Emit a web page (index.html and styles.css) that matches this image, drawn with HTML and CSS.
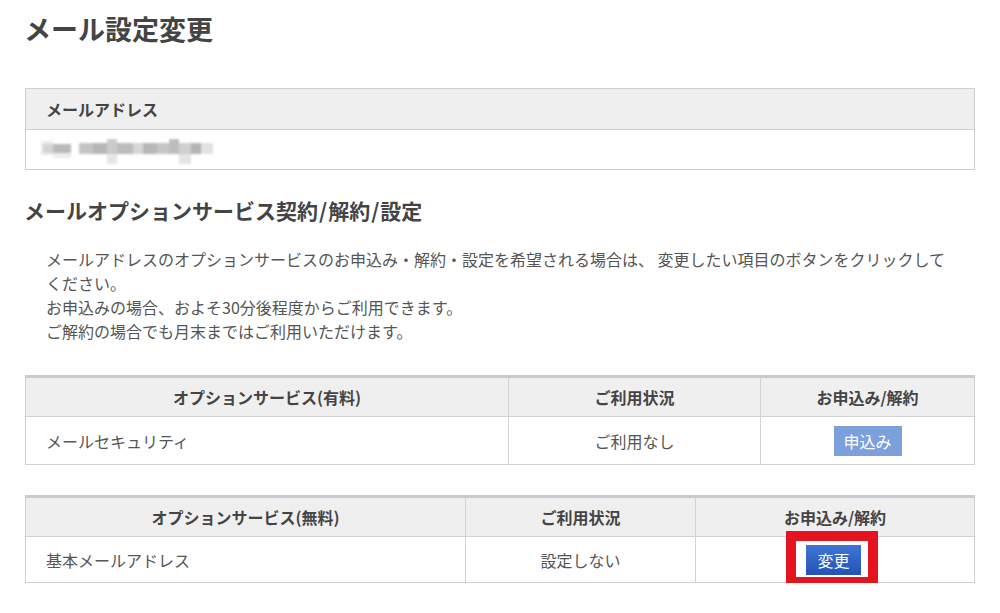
FILE: index.html
```html
<!DOCTYPE html>
<html lang="ja">
<head>
<meta charset="utf-8">
<title>メール設定変更</title>
<link rel="stylesheet" href="styles.css">
</head>
<body>
<div class="page">
  <h1 class="title">メール設定変更</h1>

  <table class="addr">
    <tr><th>メールアドレス</th></tr>
    <tr><td>
      <svg class="blur" width="180" height="30" viewBox="0 0 180 30">
        <rect x="0" y="6" width="12" height="14" fill="#ececec"/>
        <rect x="2" y="9" width="10" height="9" fill="#d4d4d4"/>
        <rect x="12" y="9" width="18" height="9" fill="#b9b9b9"/>
        <rect x="12" y="18" width="18" height="5" fill="#ededed"/>
        <rect x="38" y="8" width="14" height="11" fill="#c4c4c4"/>
        <rect x="52" y="8" width="14" height="11" fill="#b6b6b6"/>
        <rect x="66" y="4" width="10" height="15" fill="#cacaca"/>
        <rect x="66" y="19" width="10" height="10" fill="#e6e6e6"/>
        <rect x="76" y="8" width="16" height="11" fill="#bcbcbc"/>
        <rect x="92" y="8" width="10" height="11" fill="#d6d6d6"/>
        <rect x="102" y="8" width="14" height="11" fill="#b8b8b8"/>
        <rect x="116" y="8" width="12" height="11" fill="#c6c6c6"/>
        <rect x="128" y="4" width="10" height="15" fill="#bdbdbd"/>
        <rect x="138" y="8" width="12" height="11" fill="#cfcfcf"/>
        <rect x="138" y="19" width="12" height="10" fill="#e4e4e4"/>
        <rect x="150" y="8" width="10" height="11" fill="#b4b4b4"/>
        <rect x="160" y="8" width="12" height="11" fill="#e2e2e2"/>
      </svg>
    </td></tr>
  </table>

  <h2 class="section">メールオプションサービス契約<span class="sl">/</span>解約<span class="sl">/</span>設定</h2>

  <p class="note">メールアドレスのオプションサービスのお申込み・解約・設定を希望される場合は、 変更したい項目のボタンをクリックしてください。<br>お申込みの場合、およそ30分後程度からご利用できます。<br>ご解約の場合でも月末まではご利用いただけます。</p>

  <table class="opt opt-paid">
    <colgroup><col class="c1"><col class="c2"><col class="c3"></colgroup>
    <tr><th>オプションサービス(有料)</th><th>ご利用状況</th><th>お申込み/解約</th></tr>
    <tr><td class="name">メールセキュリティ</td><td class="center">ご利用なし</td><td class="center"><button class="btn btn-apply">申込み</button></td></tr>
  </table>

  <table class="opt opt-free">
    <colgroup><col class="c1"><col class="c2"><col class="c3"></colgroup>
    <tr><th>オプションサービス(無料)</th><th>ご利用状況</th><th>お申込み/解約</th></tr>
    <tr><td class="name">基本メールアドレス</td><td class="center">設定しない</td><td class="center"><span class="mark"><button class="btn btn-change">変更</button></span></td></tr>
  </table>
</div>
</body>
</html>
```

FILE: styles.css
```css
* { box-sizing: border-box; }
html, body { margin: 0; padding: 0; background: #fff; }
body {
  font-family: "Noto Sans CJK JP", "Noto Sans", sans-serif;
  color: #555;
  font-size: 16px;
}
.page {
  width: 1000px;
  padding: 0 25px;
}
.title {
  margin: 0 0 0 -1px;
  padding-top: 13px;
  font-size: 27px;
  line-height: 32px;
  font-weight: 700;
  color: #444;
}
.addr {
  margin-top: 43px;
  width: 950px;
  border-collapse: collapse;
  border: 1px solid #cfcfcf;
}
.addr th {
  background: #f0eff0;
  height: 41px;
  text-align: left;
  padding: 0 0 0 20px;
  font-size: 16px;
  font-weight: 700;
  color: #444;
  border-bottom: 1px solid #cfcfcf;
}
.addr td {
  height: 40px;
  padding: 0 0 0 15px;
}
.blur { display: block; filter: blur(1.2px); }
.section {
  margin: 26px 0 0 -1px;
  font-size: 21px;
  line-height: 28px;
  font-weight: 700;
  color: #444;
}
.section .sl { margin: 0 1px; }
.note {
  margin: 23px 0 0 0;
  padding-left: 21px;
  width: 931px;
  font-size: 16px;
  line-height: 24px;
  color: #555;
}
.opt {
  width: 949px;
  border-collapse: collapse;
  table-layout: fixed;
  border-top: 3px solid #c9c9d1;
}
.opt-paid { margin-top: 32px; }
.opt-free { margin-top: 30px; }
.opt-paid .c1 { width: 483px; }
.opt-paid .c2 { width: 252px; }
.opt-paid .c3 { width: 214px; }
.opt-free .c1 { width: 440px; }
.opt-free .c2 { width: 230px; }
.opt-free .c3 { width: 279px; }
.opt th {
  background: #f0eff0;
  height: 40px;
  font-size: 16px;
  font-weight: 700;
  color: #444;
  text-align: center;
  padding: 0;
  border: 1px solid #d2d2d2;
  border-top: none;
}
.opt td {
  border: 1px solid #d2d2d2;
  font-size: 16px;
  color: #555;
  padding: 0;
}
.opt-paid td { height: 48px; }
.opt-free td { height: 46px; }
.opt td.name { padding-left: 20px; }
.opt td.center { text-align: center; }
.btn {
  font-family: inherit;
  font-size: 16px;
  color: #fff;
  border: none;
  height: 30px;
  line-height: 30px;
  padding: 0;
  vertical-align: middle;
}
.btn-apply {
  width: 68px;
  background: #7ba0dc;
}
.btn-change {
  width: 55px;
  background: linear-gradient(#3f75d6, #2453b5);
}
.mark {
  position: relative;
  display: inline-block;
  vertical-align: middle;
  margin-left: -3px;
}
.mark .btn { display: block; }
.mark::after {
  content: "";
  position: absolute;
  left: -20px;
  top: -14px;
  right: -17px;
  bottom: -12px;
  border: 10px solid #e3141e;
  pointer-events: none;
}
```
